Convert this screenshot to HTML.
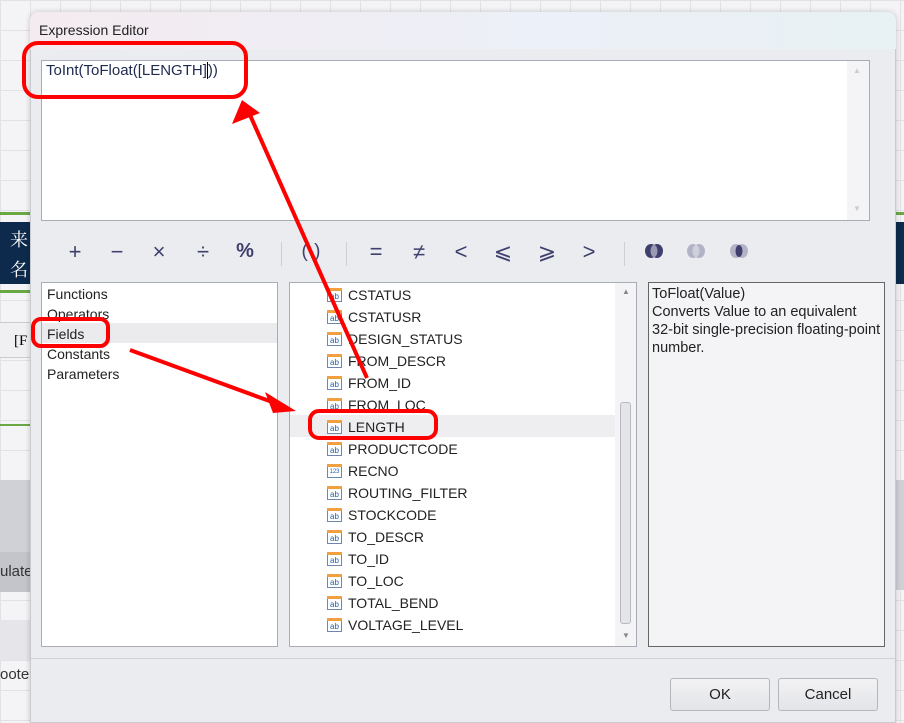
<!DOCTYPE html>
<html><head><meta charset="utf-8">
<style>
*{margin:0;padding:0;box-sizing:border-box}
body{width:904px;height:723px;position:relative;overflow:hidden;font-family:"Liberation Sans","Noto Sans CJK SC",sans-serif;background:#f4f4f6;
background-image:linear-gradient(#e2e2e6 1px,transparent 1px),linear-gradient(90deg,#e2e2e6 1px,transparent 1px);background-size:30px 30px;}
.abs{position:absolute}
.dlg{left:30px;top:12px;width:866px;height:711px;background:#ebecf0;border:1px solid #c9cad0;border-radius:8px 8px 0 0;box-shadow:0 0 6px rgba(0,0,0,.2)}
.title{left:30px;top:12px;width:866px;height:37px;border-radius:8px 8px 0 0;background:linear-gradient(90deg,#f4ebf0,#ecf0f8 60%,#e8f1f4);font-size:14px;color:#222;padding:10px 0 0 9px}
.box{background:#fff;border:1px solid #a9acb5}
.sym{position:absolute;top:239px;font-size:22px;color:#3e3f6e;width:30px;text-align:center;transform:translateX(-15px)}
.sep{position:absolute;top:242px;width:1px;height:24px;background:#cfd0d5}
.li{position:absolute;left:47px;font-size:14px;color:#222}
.fi{position:absolute;left:327px;height:22px;font-size:14px;color:#222;width:300px}
.fi .ic{position:absolute;left:0;top:4px;width:15px;height:14px;border:1px solid #6d86b3;background:#fff;font-size:8px;color:#2160b0;text-align:center;line-height:9px;padding-top:3px}
.fi .ic:before{content:"";position:absolute;left:-1px;top:-1px;width:15px;height:3px;background:#f0a040}
.fi span.t{position:absolute;left:21px;top:3px}
.btn{position:absolute;top:678px;width:100px;height:33px;border:1px solid #b4b6bd;border-radius:3px;background:linear-gradient(#f2f2f4,#e3e4e8);font-size:15px;color:#222;text-align:center;line-height:31px}
</style></head><body>
<div class="abs" style="left:0;top:212px;width:30px;height:3px;background:#6aa843"></div>
<div class="abs" style="left:0;top:222px;width:30px;height:62px;background:#0d2a4c"></div>
<div class="abs" style="left:10px;top:226px;color:#fff;font-size:18px;font-family:'Liberation Serif','Noto Serif CJK SC',serif">来</div>
<div class="abs" style="left:10px;top:256px;color:#fff;font-size:18px;font-family:'Liberation Serif','Noto Serif CJK SC',serif">名</div>
<div class="abs" style="left:0;top:290px;width:30px;height:3px;background:#6aa843"></div>
<div class="abs" style="left:0;top:322px;width:30px;height:36px;background:#f0f0f2;border-top:1px solid #ccc;border-bottom:1px solid #ccc"></div>
<div class="abs" style="left:14px;top:333px;font-size:15px;font-family:'Liberation Serif',serif">[F</div>
<div class="abs" style="left:0;top:424px;width:30px;height:2px;background:#6aa843"></div>
<div class="abs" style="left:0;top:480px;width:30px;height:72px;background:#d0d1d6"></div>
<div class="abs" style="left:0;top:552px;width:30px;height:40px;background:#c4c5ca"></div>
<div class="abs" style="left:0;top:563px;font-size:15px;color:#333">ulate</div>
<div class="abs" style="left:0;top:620px;width:30px;height:40px;background:#e6e6ea"></div>
<div class="abs" style="left:0;top:666px;font-size:15px;color:#333">oote</div>
<div class="abs" style="left:896px;top:222px;width:8px;height:62px;background:#0d2a4c"></div>
<div class="abs" style="left:896px;top:212px;width:8px;height:3px;background:#6aa843"></div>
<div class="abs" style="left:896px;top:480px;width:8px;height:110px;background:#d0d1d6"></div>

<div class="abs dlg"></div>
<div class="abs title">Expression Editor</div>

<div class="abs box" style="left:41px;top:60px;width:829px;height:161px"></div>
<div class="abs" style="left:847px;top:61px;width:22px;height:159px;background:#f4f4f6"></div>
<div class="abs" style="left:853px;top:66px;font-size:8px;color:#ccc">▲</div>
<div class="abs" style="left:853px;top:204px;font-size:8px;color:#ccc">▼</div>
<div class="abs" style="left:46px;top:62px;font-size:15px;color:#1e2a50">ToInt(ToFloat([LENGTH]<span style="border-left:1px solid #000"></span>))</div>

<div class="sym" style="left:75px">+</div>
<div class="sym" style="left:117px">−</div>
<div class="sym" style="left:159px">×</div>
<div class="sym" style="left:203px">÷</div>
<div class="sym" style="left:245px;font-weight:bold;font-size:20px;top:240px">%</div>
<div class="sep" style="left:281px"></div>
<div class="sym" style="left:311px;font-size:19px;top:241px">(·)</div>
<div class="sep" style="left:346px"></div>
<div class="sym" style="left:376px">=</div>
<div class="sym" style="left:419px">≠</div>
<div class="sym" style="left:461px">&lt;</div>
<div class="sym" style="left:503px">⩽</div>
<div class="sym" style="left:547px">⩾</div>
<div class="sym" style="left:589px">&gt;</div>
<div class="sep" style="left:624px"></div>
<svg class="abs" style="left:640px;top:240px" width="120" height="22">
<ellipse cx="11" cy="11" rx="6" ry="7" fill="#3e3f6e"/><ellipse cx="17" cy="11" rx="6" ry="7" fill="#3e3f6e"/><ellipse cx="14" cy="11" rx="3.5" ry="6" fill="#9a9ab3"/>
<ellipse cx="53" cy="11" rx="6" ry="7" fill="#b3b3c6"/><ellipse cx="59" cy="11" rx="6" ry="7" fill="#b3b3c6"/><ellipse cx="56" cy="11" rx="3.5" ry="6" fill="#d0d0dc"/>
<ellipse cx="96" cy="11" rx="6" ry="7" fill="#b3b3c6"/><ellipse cx="102" cy="11" rx="6" ry="7" fill="#b3b3c6"/><ellipse cx="99" cy="11" rx="3.5" ry="6" fill="#3e3f6e"/>
</svg>

<div class="abs box" style="left:41px;top:282px;width:237px;height:365px"></div>
<div class="abs" style="left:42px;top:323px;width:235px;height:20px;background:#ebebee"></div>
<div class="li" style="top:286px">Functions</div>
<div class="li" style="top:306px">Operators</div>
<div class="li" style="top:326px">Fields</div>
<div class="li" style="top:346px">Constants</div>
<div class="li" style="top:366px">Parameters</div>

<div class="abs box" style="left:289px;top:282px;width:348px;height:365px"></div>
<div class="abs" style="left:615px;top:283px;width:21px;height:363px;background:#f4f4f6"></div>
<div class="abs" style="left:620px;top:402px;width:11px;height:222px;border:1px solid #b8bac2;border-radius:3px;background:#e4e5e9"></div>
<div class="abs" style="left:622px;top:287px;font-size:8px;color:#888">▲</div>
<div class="abs" style="left:622px;top:631px;font-size:8px;color:#888">▼</div>
<div class="abs" style="left:290px;top:415px;width:325px;height:22px;background:#eeeef0"></div>
<div class="fi" style="top:284px"><div class="ic">ab</div><span class="t">CSTATUS</span></div>
<div class="fi" style="top:306px"><div class="ic">ab</div><span class="t">CSTATUSR</span></div>
<div class="fi" style="top:328px"><div class="ic">ab</div><span class="t">DESIGN_STATUS</span></div>
<div class="fi" style="top:350px"><div class="ic">ab</div><span class="t">FROM_DESCR</span></div>
<div class="fi" style="top:372px"><div class="ic">ab</div><span class="t">FROM_ID</span></div>
<div class="fi" style="top:394px"><div class="ic">ab</div><span class="t">FROM_LOC</span></div>
<div class="fi" style="top:416px"><div class="ic">ab</div><span class="t">LENGTH</span></div>
<div class="fi" style="top:438px"><div class="ic">ab</div><span class="t">PRODUCTCODE</span></div>
<div class="fi" style="top:460px"><div class="ic" style="font-size:6px">123</div><span class="t">RECNO</span></div>
<div class="fi" style="top:482px"><div class="ic">ab</div><span class="t">ROUTING_FILTER</span></div>
<div class="fi" style="top:504px"><div class="ic">ab</div><span class="t">STOCKCODE</span></div>
<div class="fi" style="top:526px"><div class="ic">ab</div><span class="t">TO_DESCR</span></div>
<div class="fi" style="top:548px"><div class="ic">ab</div><span class="t">TO_ID</span></div>
<div class="fi" style="top:570px"><div class="ic">ab</div><span class="t">TO_LOC</span></div>
<div class="fi" style="top:592px"><div class="ic">ab</div><span class="t">TOTAL_BEND</span></div>
<div class="fi" style="top:614px"><div class="ic">ab</div><span class="t">VOLTAGE_LEVEL</span></div>

<div class="abs" style="left:648px;top:282px;width:237px;height:365px;background:#f4f4f6;border:1px solid #666;padding:2px 3px;font-size:14.5px;line-height:18px;color:#222;white-space:nowrap">ToFloat(Value)<br>Converts Value to an equivalent<br>32-bit single-precision floating-point<br>number.</div>

<div class="abs" style="left:31px;top:658px;width:864px;height:1px;background:#d0d1d6"></div>
<div class="btn" style="left:670px">OK</div>
<div class="btn" style="left:778px">Cancel</div>

<svg class="abs" style="left:0;top:0" width="904" height="723">
<g fill="none" stroke="#f00" stroke-width="4">
<rect x="24" y="43" width="222" height="54" rx="14"/>
<rect x="33" y="319" width="75" height="27" rx="8"/>
<rect x="310" y="411" width="126" height="27" rx="9"/>
<line x1="367" y1="378" x2="250" y2="115"/>
<line x1="130" y1="350" x2="275" y2="403"/>
</g>
<polygon points="242,100 232,124 260,113" fill="#f00"/>
<polygon points="296,411 265,392 273,413" fill="#f00"/>
</svg>
</body></html>
